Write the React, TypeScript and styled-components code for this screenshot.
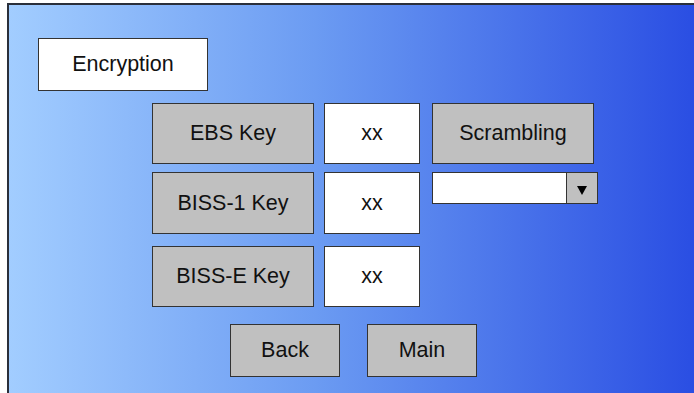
import React from "react";
import styled, { createGlobalStyle } from "styled-components";

const Global = createGlobalStyle`
  html, body {
    margin: 0;
    padding: 0;
    background: #ffffff;
    overflow: hidden;
    width: 694px;
    height: 393px;
  }
  * { box-sizing: border-box; }
`;

const Panel = styled.div`
  margin: 3px 0 0 7px;
  width: 687px;
  height: 390px;
  border-top: 2px solid #2a2f3a;
  border-left: 2px solid #2a2f3a;
  background: linear-gradient(to right, #a2cdff 0%, #6b9bf2 45%, #2a4ee3 100%);
  font-family: "Liberation Sans", Arial, sans-serif;
  font-size: 21.5px;
  color: #111;
  display: flex;
  flex-direction: column;
  padding: 33px 0 0 29px;
`;

const Title = styled.div`
  width: 170px;
  height: 53px;
  background: #ffffff;
  border: 1px solid #333;
  display: flex;
  align-items: center;
  justify-content: center;
`;

const Rows = styled.div`
  display: flex;
  flex-direction: column;
  margin: 12px 0 0 114px;
`;

const Row = styled.div<{ $top?: number }>`
  display: grid;
  grid-template-columns: 162px 96px 166px;
  column-gap: 10px;
  margin-top: ${(p) => p.$top ?? 0}px;
  & > :nth-child(3) {
    margin-left: 2px;
  }
`;

const Cell = styled.div<{ $h: number }>`
  height: ${(p) => p.$h}px;
  border: 1px solid #333;
  display: flex;
  align-items: center;
  justify-content: center;
`;

const GrayButton = styled(Cell)<{ $w?: number }>`
  background: #c0c0c0;
  width: ${(p) => (p.$w ? `${p.$w}px` : "auto")};
`;

const ValueBox = styled(Cell)`
  background: #ffffff;
`;

const Select = styled.div`
  width: 166px;
  height: 32px;
  display: flex;
  border: 1px solid #333;
  background: #ffffff;
  align-self: start;
`;

const SelectField = styled.div`
  flex: 1;
`;

const SelectArrow = styled.div`
  width: 31px;
  border-left: 1px solid #333;
  background: #c0c0c0;
  display: flex;
  align-items: center;
  justify-content: center;
  padding-top: 5px;
`;

const Actions = styled.div`
  display: flex;
  gap: 27px;
  margin: 17px 0 0 192px;
`;

export default function App() {
  return (
    <>
      <Global />
      <Panel>
        <Title>Encryption</Title>
        <Rows>
          <Row>
            <GrayButton $h={61}>EBS Key</GrayButton>
            <ValueBox $h={61}>xx</ValueBox>
            <GrayButton $h={61} $w={162}>Scrambling</GrayButton>
          </Row>
          <Row $top={8}>
            <GrayButton $h={62}>BISS-1 Key</GrayButton>
            <ValueBox $h={62}>xx</ValueBox>
            <Select>
              <SelectField />
              <SelectArrow>
                <svg width="10" height="9" viewBox="0 0 10 9">
                  <polygon points="0,0 10,0 5,9" fill="#000" />
                </svg>
              </SelectArrow>
            </Select>
          </Row>
          <Row $top={12}>
            <GrayButton $h={61}>BISS-E Key</GrayButton>
            <ValueBox $h={61}>xx</ValueBox>
          </Row>
        </Rows>
        <Actions>
          <GrayButton $h={53} $w={110}>Back</GrayButton>
          <GrayButton $h={53} $w={110}>Main</GrayButton>
        </Actions>
      </Panel>
    </>
  );
}
